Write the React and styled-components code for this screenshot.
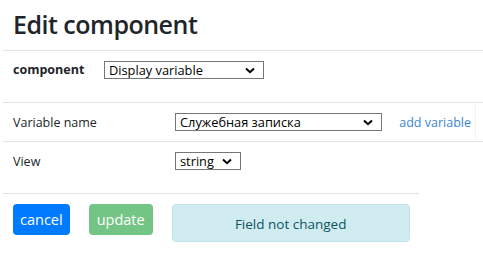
import React from "react";
import styled, { createGlobalStyle } from "styled-components";

const GlobalStyle = createGlobalStyle`
  body {
    margin: 0;
    background: #fff;
    font-family: "Open Sans", "Noto Sans", sans-serif;
    color: #212529;
  }
`;

const Page = styled.div`
  width: 483px;
  padding-left: 3px;
  box-sizing: border-box;
`;

const Header = styled.div`
  height: 50px;
  padding-left: 10px;
  border-bottom: 1px solid #dee2e6;
  display: flex;
  align-items: center;
`;

const Title = styled.h3`
  margin: 0;
  font-size: 25px;
  font-weight: 600;
  letter-spacing: -0.5px;
  color: #212529;
  padding-bottom: 3px;
`;

const TopRow = styled.div`
  height: 51px;
  padding: 10px 10px 0;
  box-sizing: border-box;
  display: flex;
  align-items: flex-start;
`;

const Bold = styled.span`
  font-weight: 700;
  font-size: 12.5px;
  width: 91px;
  line-height: 18px;
`;

const SelectBox = styled.div`
  width: ${(p) => p.w}px;
  height: 18px;
  box-sizing: border-box;
  border: 1px solid #767676;
  display: flex;
  align-items: center;
  justify-content: space-between;
  padding: 0 8px 0 4px;
  font-size: 12.8px;
  color: #000;
  background: #fff;
`;

const Chevron = () => (
  <svg width="10" height="7" viewBox="0 0 10 7">
    <path d="M1 1.5 L5 5.2 L9 1.5" fill="none" stroke="#000" strokeWidth="2" />
  </svg>
);

const Select = ({ w, children }) => (
  <SelectBox w={w}>
    <span>{children}</span>
    <Chevron />
  </SelectBox>
);

const Row = styled.div`
  height: 39px;
  box-sizing: border-box;
  border-top: 1px solid #dee2e6;
  display: flex;
  align-items: center;
  padding-left: 10px;
  font-size: 12.5px;
`;

const Label = styled.span`
  width: 162px;
`;

const Cell = styled.div`
  flex: 1;
  display: flex;
  align-items: center;
  justify-content: space-between;
  height: 100%;
`;

const Link = styled.a`
  color: #3b86d2;
  font-size: 12.5px;
  text-decoration: none;
  display: flex;
  align-items: center;
  padding-right: 4px;
  margin-right: 7px;
  border-right: 1px solid #f3f3f3;
  box-sizing: border-box;
  height: 36px;
  align-self: flex-start;
  margin-top: 1px;
`;

const Footer = styled.div`
  margin-top: 13px;
  width: 416px;
  box-sizing: border-box;
  border-top: 1px solid #dee2e6;
  padding: 10px 0 0 10px;
  display: flex;
  align-items: flex-start;
  gap: 19px;
`;

const Button = styled.button`
  height: 31px;
  padding: 0 ${(p) => p.px}px;
  border: none;
  border-radius: 4px;
  color: #fff;
  font-family: inherit;
  font-size: 14.5px;
  background: ${(p) => p.bg};
  opacity: ${(p) => (p.disabled ? 0.65 : 1)};
`;

const Alert = styled.div`
  width: 238px;
  height: 38px;
  box-sizing: border-box;
  background: #d1ecf1;
  border: 1px solid #bee5eb;
  border-radius: 4px;
  color: #0c5460;
  font-size: 13.5px;
  display: flex;
  align-items: center;
  justify-content: center;
  padding-top: 1px;
`;

export default function App() {
  return (
    <Page>
      <GlobalStyle />
      <Header>
        <Title>Edit component</Title>
      </Header>
      <TopRow>
        <Bold>component</Bold>
        <Select w={160}>Display variable</Select>
      </TopRow>
      <Row>
        <Label>Variable name</Label>
        <Cell>
          <Select w={207}>Служебная записка</Select>
          <Link href="#">add variable</Link>
        </Cell>
      </Row>
      <Row>
        <Label>View</Label>
        <Select w={66}>string</Select>
      </Row>
      <Footer>
        <Button bg="#007bff" px={7}>cancel</Button>
        <Button bg="#28a745" px={8} disabled>update</Button>
        <Alert>Field not changed</Alert>
      </Footer>
    </Page>
  );
}
